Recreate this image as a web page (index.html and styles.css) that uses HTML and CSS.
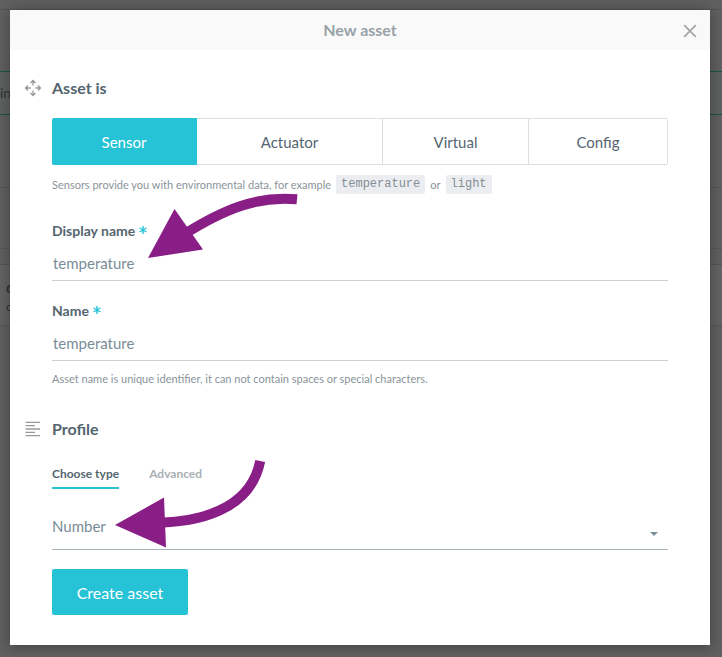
FILE: index.html
```html
<!DOCTYPE html>
<html lang="en">
<head>
<meta charset="utf-8">
<title>New asset</title>
<link rel="stylesheet" href="styles.css">
</head>
<body>
<div class="backdrop">
  <div class="page-top"></div>
  <div class="page-field">in</div>
  <div class="page-row"></div>
  <div class="page-row page-row-short"></div>
  <div class="page-card"><b>c</b><span>c</span></div>
</div>
<main class="modal">
  <header class="modal-header">
    <h1>New asset</h1>
    <svg class="close" width="14" height="14" viewBox="0 0 14 14"><path d="M1.2 1.2 12.8 12.8M12.8 1.2 1.2 12.8"/></svg>
  </header>
  <div class="modal-body">
    <section>
      <h2>
        <svg class="section-icon" width="18" height="18" viewBox="0 0 18 18"><path d="M9 6.5V2M6.5 4 9 1.5 11.5 4M9 11.5V16M6.5 14 9 16.500 11.500 14M6.500 9H2M4 6.500 1.500 9 4 11.500M11.500 9H16M14 6.500 16.500 9 14 11.500"/></svg>
        <span class="asset-title">Asset is</span>
      </h2>
      <div class="kinds">
        <button class="kind kind-sensor">Sensor</button>
        <button class="kind kind-actuator">Actuator</button>
        <button class="kind kind-virtual">Virtual</button>
        <button class="kind kind-config">Config</button>
      </div>
      <p class="hint kind-hint"><span class="hint-lead">Sensors provide you with environmental data, for example</span><code>temperature</code><span>or</span><code>light</code></p>
      <label class="label"><span class="label-display">Display name</span><svg class="star" width="8" height="8" viewBox="0 0 8 8"><path d="M4 0V8M.5 2 7.500 6M7.500 2 .5 6"/></svg></label>
      <div class="input">temperature</div>
      <label class="label label-second"><span class="label-name">Name</span><svg class="star" width="8" height="8" viewBox="0 0 8 8"><path d="M4 0V8M.5 2 7.500 6M7.500 2 .5 6"/></svg></label>
      <div class="input">temperature</div>
      <p class="hint name-hint"><span>Asset name is unique identifier, it can not contain spaces or special characters.</span></p>
    </section>
    <section>
      <h2 class="profile-heading">
        <svg class="section-icon" width="18" height="18" viewBox="0 0 18 18"><path d="M1.500 2.300H16M1.500 5.600H11M1.500 9H16M1.500 12.300H11M1.500 15.600H16"/></svg>
        <span>Profile</span>
      </h2>
      <nav class="tabs"><a class="tab tab-active">Choose type</a><a class="tab">Advanced</a></nav>
      <div class="select"><span>Number</span><svg class="caret" width="8" height="4" viewBox="0 0 8 4"><path d="M0 0H8L4 4Z"/></svg></div>
      <button class="submit">Create asset</button>
    </section>
  </div>
</main>
<svg class="arrows" width="722" height="657" viewBox="0 0 722 657">
  <path class="arrow-line" d="M297 199.300C258 195.500 224 209 183 235"/>
  <path class="arrow-head" d="M148 258 174.500 209 203 249.500Z"/>
  <path class="arrow-line" d="M260.200 461C252 503 212 521 160 522.700"/>
  <path class="arrow-head" d="M115 525 164 497.500 166 547.500Z"/>
</svg>
</body>
</html>
```

FILE: styles.css
```css
* { box-sizing: border-box; }
body { margin: 0; width: 722px; height: 657px; overflow: hidden; background: #606060; font-family: Lato, "Liberation Sans", sans-serif; color: #546570; }
h1, h2, p { margin: 0; }
button { font: inherit; margin: 0; padding: 0; }
svg { display: block; flex: none; fill: none; }
.backdrop { position: absolute; inset: 0; color: #303437; }
.page-top { height: 10px; border-bottom: 1px solid #555; }
.page-field { margin-top: 61px; height: 44px; border: solid #1b5442; border-width: 1px 0; background: #5e6361; line-height: 42px; font-size: 14px; }
.page-row { height: 73px; border-bottom: 1px solid #565656; }
.page-row-short { height: 61px; }
.page-card { margin-top: 15px; height: 62px; border: solid #565656; border-width: 1px 0; background: #646464; padding: 12px 0 0 6px; font-size: 15px; line-height: 20px; }
.page-card b, .page-card span { display: block; }
.page-card span { font-size: 12px; }
.modal { position: relative; margin: 10px; width: 700px; height: 635px; background: #fff; box-shadow: 0 1px 14px rgba(0,0,0,.35); }
.modal-header { height: 40px; background: #f9f9f9; display: flex; align-items: center; justify-content: center; position: relative; }
h1 { font-size: 16px; line-height: 20px; font-weight: 700; color: #98a2a8; }
.close { position: absolute; right: 13px; top: 14px; stroke: #a5a5a5; stroke-width: 1.7; }
.modal-body { padding: 28px 42px 0; }
h2 { display: flex; align-items: center; gap: 10px; height: 20px; margin-left: -28px; font-size: 16px; line-height: 20px; font-weight: 700; }
.section-icon { stroke: #999; stroke-width: 1.3; }
.kinds { display: flex; height: 47px; margin-top: 20px; }
.kind { border: 1px solid #dedede; border-left: 0; background: #fff; color: #546570; font-size: 15px; }
.kind-sensor { width: 145px; background: #26c2d6; border-color: #26c2d6; color: #fff; border-radius: 2px 0 0 2px; }
.kind-actuator { width: 186px; }
.kind-virtual { width: 146px; }
.kind-config { width: 139px; border-radius: 0 2px 2px 0; }
.hint { display: flex; align-items: center; height: 20px; font-size: 11px; color: #89949a; white-space: nowrap; }
.kind-hint { margin-top: 9px; }
code { height: 19px; margin: 0 5px; padding: 0 5px; border-radius: 2px; background: #ecedf1; font: 12px/19px "Liberation Mono", monospace; color: #858e94; }
.label { display: flex; align-items: center; gap: 4px; height: 20px; margin-top: 26px; font-size: 14px; font-weight: 700; }
.label-second { margin-top: 19px; }
.star { stroke: #26c2d6; stroke-width: 1.4; margin-top: -1px; }
.input { height: 41px; padding: 13px 0 0 1px; border-bottom: 1px solid #cbd2d6; font-size: 15px; line-height: 20px; color: #788d98; }
.label-second + .input { height: 41px; }
.label + .input { margin-top: 0; }
.name-hint { margin-top: 7px; }
.profile-heading { margin-top: 31px; }
.tabs { display: flex; gap: 30px; height: 50px; padding-top: 25px; font-size: 12px; line-height: 20px; font-weight: 700; }
.tab { color: #a8b0b4; height: 25px; }
.tab-active { color: #546570; border-bottom: 2px solid #26c2d6; }
.select { display: flex; justify-content: space-between; height: 61px; padding: 27px 10px 0 0; border-bottom: 1px solid #a7b4bb; font-size: 15px; line-height: 20px; color: #788d98; }
.caret { fill: #78909c; margin-top: 16px; }
.submit { display: block; width: 136px; height: 46px; margin-top: 19px; border: 0; border-radius: 2px; background: #26c2d6; color: #fff; font-size: 16px; }
.arrows { position: absolute; left: 0; top: 0; pointer-events: none; }
.arrow-line { stroke: #881e86; stroke-width: 10; }
.arrow-head { fill: #881e86; }
```
